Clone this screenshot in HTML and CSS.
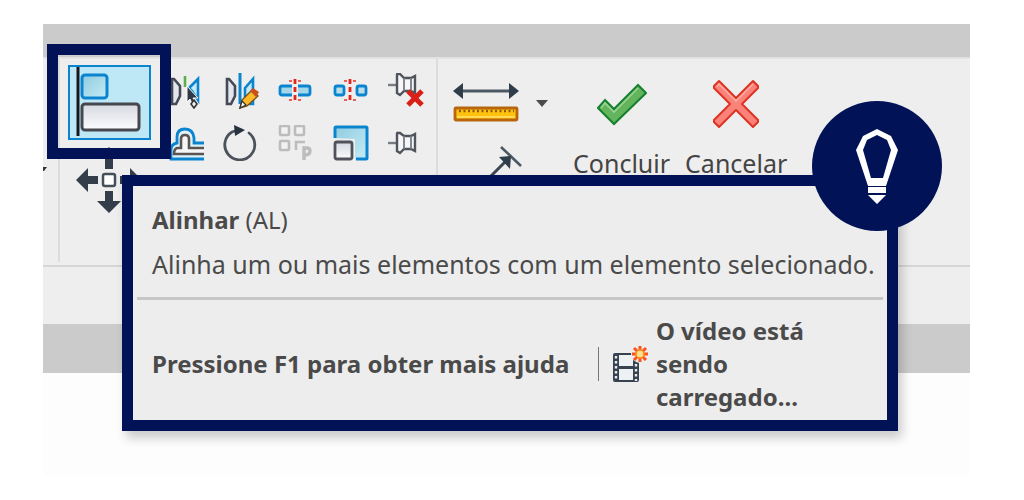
FILE: index.html
```
<!DOCTYPE html>
<html lang="pt-BR">
<head>
  <title>Alinhar (AL)</title>
  <meta charset="UTF-8">
  <meta name="viewport" content="width=device-width, initial-scale=1.0">
  <link rel="stylesheet" href="styles.css">
</head>
<body>
  <main class="screen">
    <div class="titlebar"></div>

    <div class="ribbon">
      <div class="panel panel-prev">
        <svg width="5" height="6" viewBox="0 0 5 6"><path d="M0 0H4L1 4H0z" fill="#333"/></svg>
      </div>

      <div class="panel panel-modify">
        <div class="big-tools">
          <button type="button" class="tool align-tool" aria-label="Alinhar">
            <svg width="79" height="71" viewBox="0 0 79 71">
              <defs>
                <linearGradient id="blueFill" x1="0" y1="0" x2="1" y2="1">
                  <stop offset="0" stop-color="#8ecbdf"/><stop offset="1" stop-color="#c5ebf5"/>
                </linearGradient>
                <linearGradient id="greyFill" x1="0" y1="0" x2="0" y2="1">
                  <stop offset="0" stop-color="#d6d9e2"/><stop offset="1" stop-color="#fcfcfd"/>
                </linearGradient>
              </defs>
              <path d="M8 0V69" stroke="#15181c" stroke-width="3"/>
              <rect x="12" y="8" width="25" height="23" rx="3" fill="url(#blueFill)" stroke="#0a84cf" stroke-width="3"/>
              <rect x="12" y="37" width="57" height="26" rx="3" fill="url(#greyFill)" stroke="#46474f" stroke-width="3"/>
            </svg>
            <span class="highlight"></span>
          </button>
          <button type="button" class="tool move-tool" aria-label="Mover">
            <svg width="66" height="66" viewBox="0 0 66 66">
              <g fill="#333e4a">
                <path id="arrow" d="M33 0L45 12H37V22H29V12H21z"/>
                <use href="#arrow" transform="rotate(90 33 33)"/>
                <use href="#arrow" transform="rotate(180 33 33)"/>
                <use href="#arrow" transform="rotate(270 33 33)"/>
              </g>
              <rect x="27" y="27" width="12" height="12" rx="2" fill="#fff" stroke="#46505b" stroke-width="2.5"/>
            </svg>
          </button>
        </div>

        <div class="small-tools">
          <button type="button" class="tool" aria-label="Espelhar - Selecionar eixo">
            <svg width="36" height="36" viewBox="0 0 36 36">
              <path d="M4 31V6H6L12 13V23L8 31z" fill="#e3e6ee" stroke="#434a55" stroke-width="2.6"/>
              <path d="M17 3V14" stroke="#5cb04a" stroke-width="2.6"/>
              <path d="M21 15L30 6V27L24 18z" fill="#c3e9f6" stroke="#0a84cf" stroke-width="2.6"/>
              <path d="M19 13V29L22 26L25 33L28 31L25 25L30 25z" fill="#2f3843" stroke="#fff" stroke-width="1"/>
              <path d="M26 27L29 31L26 35L23 31z" fill="#eee" stroke="#333" stroke-width="1.6"/>
            </svg>
          </button>
          <button type="button" class="tool" aria-label="Espelhar - Desenhar eixo">
            <svg width="36" height="36" viewBox="0 0 36 36">
              <path d="M4 31V6H6L12 13V23L8 31z" fill="#e3e6ee" stroke="#434a55" stroke-width="2.6"/>
              <path d="M17 0V31" stroke="#0a84cf" stroke-width="3"/>
              <path d="M22 15L30 6V31H22z" fill="#c3e9f6" stroke="#0a84cf" stroke-width="2.6"/>
              <path d="M17 35L19 27L29 17L35 23L24 33z" fill="#fbb829" stroke="#7a4a12" stroke-width="1.3"/>
              <path d="M27 18L30 15L36 19L33 24z" fill="#c8511b"/>
              <path d="M17 35L19 28L23 32z" fill="#fff" stroke="#333" stroke-width="1.3"/>
            </svg>
          </button>
          <button type="button" class="tool" aria-label="Dividir elemento">
            <svg width="36" height="36" viewBox="0 0 36 36">
              <path d="M14 13H4Q2 13 2 15V20Q2 22 4 22H14M20 13H30Q32 13 32 15V20Q32 22 30 22H20" fill="#a5d7e8" stroke="#0a84cf" stroke-width="2.8"/>
              <path d="M17 6V30" stroke="#e3251b" stroke-width="2.8" stroke-dasharray="5 3"/>
              <path d="M11 8H14M20 8H23M11 27H14M20 27H23" stroke="#e86059" stroke-width="2"/>
            </svg>
          </button>
          <button type="button" class="tool" aria-label="Dividir com folga">
            <svg width="36" height="36" viewBox="0 0 36 36">
              <rect x="2" y="13" width="9" height="9" rx="2" fill="#b9deea" stroke="#0a84cf" stroke-width="2.8"/>
              <rect x="24" y="13" width="9" height="9" rx="2" fill="#b9deea" stroke="#0a84cf" stroke-width="2.8"/>
              <path d="M17 6V30" stroke="#e3251b" stroke-width="2.8" stroke-dasharray="5 3"/>
              <path d="M11 8H14M20 8H23M11 27H14M20 27H23" stroke="#e86059" stroke-width="2"/>
            </svg>
          </button>
          <button type="button" class="tool" aria-label="Desafixar">
            <svg width="36" height="36" viewBox="0 0 36 36">
              <path d="M0 12H9" stroke="#777c83" stroke-width="2.4"/>
              <path d="M10 1Q9 0 9 2V20L12 22L16 18H23L27 20V3L23 5H16L12 1z" fill="#f6f6f8" stroke="#50555d" stroke-width="2.4"/>
              <path d="M16 5V18M23 5V18" stroke="#777c83" stroke-width="1.8"/>
              <path d="M20 18L34 32M34 18L20 32" stroke="#d91f17" stroke-width="5"/>
            </svg>
          </button>
          <button type="button" class="tool" aria-label="Deslocamento">
            <svg width="36" height="36" viewBox="0 0 36 36">
              <path d="M36 18H26V13Q25 4 17 4Q9 4 9 12V18Q3 19 3 25V34H36" fill="#dff2fa" stroke="#0a84cf" stroke-width="2.8"/>
              <path d="M36 23H21V14Q21 10 17 10Q13 10 13 14V23H9Q6 24 6 29H36" fill="#f6f6f6" stroke="#5a5553" stroke-width="2.6"/>
            </svg>
          </button>
          <button type="button" class="tool" aria-label="Rotacionar">
            <svg width="36" height="36" viewBox="0 0 36 36">
              <path d="M26 8A15 15 0 1 1 9 7L15 5" fill="none" stroke="#4b525b" stroke-width="2.8" stroke-linecap="round"/>
              <path d="M11 0L22 5L12 11z" fill="#28323d"/>
            </svg>
          </button>
          <button type="button" class="tool" aria-label="Matriz" disabled>
            <svg width="36" height="36" viewBox="0 0 36 36">
              <g fill="#f2f2f2" stroke="#bcbcbc" stroke-width="2.6">
                <rect x="2" y="1" width="9" height="9" rx="1"/>
                <rect x="17" y="1" width="9" height="9" rx="1"/>
                <rect x="2" y="16" width="9" height="9" rx="1"/>
                <path d="M27 17H18V25" fill="none"/>
                <path d="M26 35V23H29Q32 23 32 26Q32 30 27 30" fill="none" stroke-width="3.4"/>
              </g>
            </svg>
          </button>
          <button type="button" class="tool" aria-label="Escala">
            <svg width="36" height="36" viewBox="0 0 36 36">
              <path d="M1 13V3Q1 1 3 1H32Q34 1 34 3V32Q34 34 32 34H22V14z" fill="url(#blueFill)"/>
              <path d="M2 13V3Q2 2 3 2H33Q34 2 34 3V33Q34 34 33 34H23" fill="none" stroke="#0a84cf" stroke-width="3"/>
              <rect x="2" y="17" width="17" height="17" rx="2" fill="url(#greyFill)" stroke="#50535c" stroke-width="2.8"/>
            </svg>
          </button>
          <button type="button" class="tool" aria-label="Fixar">
            <svg width="36" height="36" viewBox="0 0 36 36">
              <path d="M0 18H9" stroke="#777c83" stroke-width="2.4"/>
              <path d="M10 8Q9 7 9 9V26L12 28L16 24H23L27 26V9L23 11H16L12 8z" fill="#f6f6f8" stroke="#50555d" stroke-width="2.4"/>
              <path d="M16 11V24M23 11V24" stroke="#777c83" stroke-width="1.8"/>
            </svg>
          </button>
        </div>
      </div>

      <div class="panel panel-measure">
        <button type="button" class="tool measure-tool" aria-label="Medir">
          <svg width="66" height="42" viewBox="0 0 66 42">
            <path d="M6 11H60" stroke="#4c5863" stroke-width="2.8"/>
            <path d="M0 11L10 3V19zM66 11L56 3V19z" fill="#2f3c49"/>
            <rect x="2" y="28" width="62" height="12" rx="1" fill="#ffc20e" stroke="#b8650c" stroke-width="2.8"/>
            <path d="M6 31H61" stroke="#8f5a0c" stroke-width="2.5" stroke-dasharray="2 2.5"/>
            <path d="M4 37H62" stroke="#ffe36b" stroke-width="1.5"/>
          </svg>
          <svg width="12" height="14" viewBox="0 -6 12 14"><path d="M0 0H12L6 7z" fill="#4b4b4b"/></svg>
        </button>
        <button type="button" class="tool dimension-tool" aria-label="Cota alinhada">
          <svg width="34" height="34" viewBox="0 0 34 34">
            <path d="M12 3L32 22" stroke="#4c5863" stroke-width="2.6"/>
            <path d="M2 32L16 18" stroke="#3b4651" stroke-width="3"/>
            <path d="M10 13L22 12L21 25z" fill="#2f3c49"/>
          </svg>
        </button>
      </div>

      <div class="panel panel-confirm">
        <button type="button" class="action">
          <svg width="50" height="50" viewBox="0 0 50 50">
            <path d="M1 29L8 21L17 30L41 6L49 14L17 45z" fill="#63b45c" stroke="#178030" stroke-width="2"/>
            <path d="M4 29L8 24L17 33L41 9" fill="none" stroke="#9bd392" stroke-width="1.6"/>
          </svg>
          Concluir
        </button>
        <button type="button" class="action">
          <svg width="50" height="50" viewBox="0 0 50 50">
            <path d="M3 7L8 2L25 19L42 2L47 7V9L31 25L47 41V43L42 48L25 31L8 48L3 43V41L19 25L3 9z" fill="#fb8278" stroke="#dc3324" stroke-width="2" stroke-linejoin="round"/>
            <path d="M6 8L8 5L25 22L42 5" fill="none" stroke="#ffaaa2" stroke-width="1.6"/>
          </svg>
          Cancelar
        </button>
      </div>
    </div>

    <div class="options-bar"></div>
    <div class="view-bar"></div>
    <div class="canvas"></div>

    <section class="tooltip" role="tooltip">
      <h1 class="tooltip-title">Alinhar <span>(AL)</span></h1>
      <p class="tooltip-text">Alinha um ou mais elementos com um elemento selecionado.</p>
      <div class="tooltip-footer">
        <p class="help">Pressione F1 para obter mais ajuda</p>
        <div class="video">
          <svg width="36" height="38" viewBox="0 0 36 38">
            <rect x="1" y="8" width="26" height="29" rx="2" fill="#36424f"/>
            <path d="M7 10H21V21H7zM7 24H21V35H7z" fill="#edf1f4"/>
            <path d="M4 11V36M24 19V36" stroke="#e8ecef" stroke-width="2.4" stroke-dasharray="2.4 2.6"/>
            <circle cx="28" cy="9" r="9" fill="#ededed"/>
            <g stroke="#f9541b" stroke-width="3">
              <path d="M28 1V17M20 9H36M22 3L34 15M34 3L22 15"/>
            </g>
            <circle cx="28" cy="9" r="4" fill="#ffe08a" stroke="#ff8a1c" stroke-width="1.5"/>
          </svg>
          <p>O vídeo está sendo carregado...</p>
        </div>
      </div>
      <div class="tip-badge">
        <svg width="42" height="76" viewBox="0 0 42 76">
          <path d="M21 1L35 8L42 22L30 58H12L0 22L7 8zM21 7L11 12L7 22L15 50H27L35 22L31 12z" fill="#fff" fill-rule="evenodd"/>
          <path d="M12 59H30V65H12zM12 67H30L21 76z" fill="#fff"/>
        </svg>
      </div>
    </section>
  </main>
</body>
</html>
```
FILE: styles.css
```
* {
  box-sizing: border-box;
}
body {
  font-family: "Noto Sans", "Open Sans", sans-serif;
  margin: 0;
  padding: 24px 54px 0 43px;
  background-color: #fff;
  color: #4a4a4a;
  font-size: 25px;
}
p, h1 {
  margin: 0;
}
svg {
  display: block;
  flex-shrink: 0;
}
button {
  font: inherit;
  color: inherit;
  background: none;
  border: none;
  padding: 0;
}
.screen {
  position: relative;
}
.titlebar {
  height: 33px;
  background-color: #cbcbcb;
}
.ribbon {
  display: flex;
  height: 208px;
  padding-bottom: 3px;
  background-color: #eee;
  border-top: 2px solid #e2e2e2;
}
.panel {
  border-right: 2px solid #dcdcdc;
}
.panel-prev {
  width: 17px;
  padding-top: 108px;
}
.panel-modify {
  display: flex;
  padding: 6px 3px 0 0;
}
.big-tools {
  display: flex;
  flex-direction: column;
  align-items: center;
  gap: 7px;
  width: 98px;
}
.small-tools {
  display: grid;
  grid-template-columns: repeat(5, 55px);
  grid-template-rows: repeat(2, 52px);
}
.tool {
  display: flex;
  align-items: center;
  justify-content: center;
}
.align-tool {
  position: relative;
  z-index: 1;
  border: 2px solid #0a84cf;
  background-color: #bfe8f7;
}
.highlight {
  position: absolute;
  inset: -23px -22px -21px -23px;
  border: 11px solid #021257;
}
.panel-measure {
  display: flex;
  flex-direction: column;
  align-items: flex-start;
  gap: 22px;
  padding: 21px 25px 0 15px;
  border-right: none;
}
.measure-tool {
  gap: 17px;
}
.dimension-tool {
  margin-left: 36px;
}
.panel-confirm {
  display: flex;
  align-items: flex-start;
  gap: 15px;
  padding-top: 20px;
  border-right: none;
}
.action {
  display: flex;
  flex-direction: column;
  align-items: center;
  gap: 18px;
  color: #444;
  line-height: 33px;
}
.options-bar {
  height: 59px;
  background-color: #eee;
  border-top: 2px solid #d6d6d6;
}
.view-bar {
  height: 49px;
  background-color: #cbcbcb;
}
.canvas {
  height: 102px;
  background-color: #fdfdfd;
}
.tooltip {
  position: absolute;
  top: 151px;
  left: 79px;
  right: 72px;
  z-index: 2;
  padding: 17px 4px 7px;
  border: 11px solid #021257;
  background-color: #ededed;
  box-shadow: 4px 7px 10px rgba(0, 0, 0, 0.2);
  line-height: 33px;
}
.tooltip-title,
.tooltip-text {
  padding-left: 15px;
}
.tooltip-title {
  font-size: 24px;
}
.tooltip-title span {
  font-weight: normal;
}
.tooltip-text {
  padding-top: 12px;
  padding-bottom: 16px;
  border-bottom: 3px solid #c6c6c6;
}
.tooltip-footer {
  display: flex;
  align-items: center;
  padding: 14px 60px 0 15px;
  font-size: 24px;
  font-weight: bold;
}
.help {
  flex: 1;
}
.video {
  display: flex;
  align-items: center;
  gap: 8px;
  width: 225px;
}
.video::before {
  content: "";
  width: 2px;
  height: 34px;
  margin-right: 5px;
  background-color: #777;
}
.tip-badge {
  position: absolute;
  top: -85px;
  right: -55px;
  display: flex;
  align-items: center;
  justify-content: center;
  width: 130px;
  height: 130px;
  border-radius: 50%;
  background-color: #021257;
}
```
